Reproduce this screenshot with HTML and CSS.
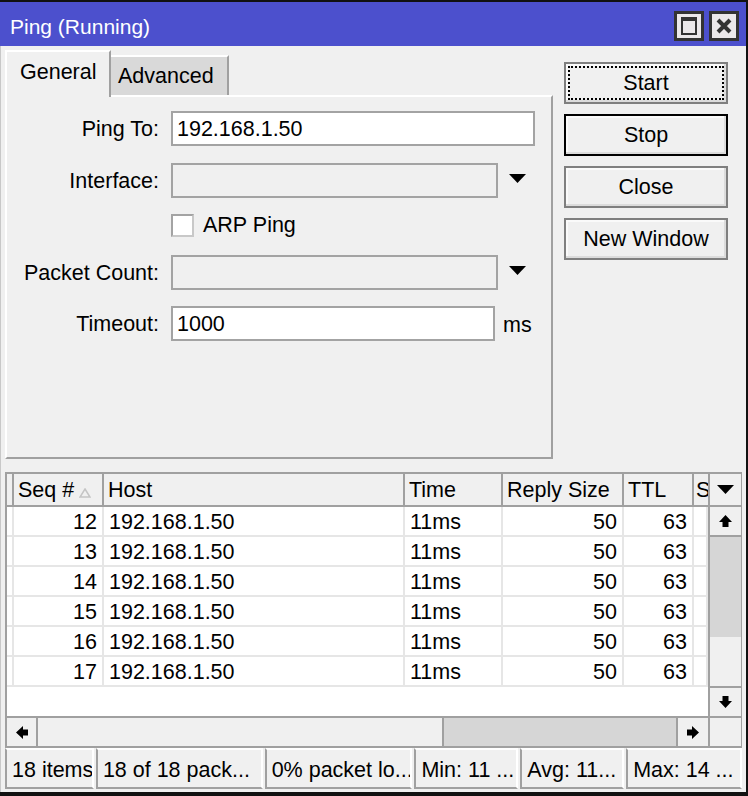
FILE: index.html
```html
<!DOCTYPE html>
<html>
<head>
<meta charset="utf-8">
<link rel="stylesheet" href="styles.css">
</head>
<body>
<div class="window">
  <div class="titlebar">
    <span class="title">Ping (Running)</span>
    <div class="tb-btns">
      <span class="tb-btn">
        <svg width="30" height="30" viewBox="0 0 30 30"><rect x="0" y="0" width="30" height="30" fill="#333"/><rect x="3" y="3" width="24" height="24" fill="#ebe8ea"/><rect x="7" y="6" width="16" height="18" fill="#333"/><rect x="9" y="10" width="12" height="12" fill="#ebe8ea"/></svg>
      </span>
      <span class="tb-btn">
        <svg width="30" height="30" viewBox="0 0 30 30"><rect x="0" y="0" width="30" height="30" fill="#333"/><rect x="3" y="3" width="24" height="24" fill="#ebe8ea"/><path d="M9 9 L21 21 M21 9 L9 21" stroke="#333" stroke-width="4"/></svg>
      </span>
    </div>
  </div>
  <div class="main">
    <div class="top">
      <div class="tabwrap">
        <div class="tabs">
          <div class="tab active">General</div>
          <div class="tab">Advanced</div>
        </div>
        <div class="panel">
          <div class="row">
            <span class="lbl">Ping To:</span>
            <div class="field w-ping">192.168.1.50</div>
          </div>
          <div class="row mt17">
            <span class="lbl">Interface:</span>
            <div class="field disabled w-drop"></div>
            <svg class="caret" width="17" height="9" viewBox="0 0 17 9"><path d="M0 0 H17 L8.5 9 Z" fill="#000"/></svg>
          </div>
          <div class="row check-row">
            <span class="lbl"></span>
            <span class="checkbox"></span>
            <span class="check-label">ARP Ping</span>
          </div>
          <div class="row mt18">
            <span class="lbl">Packet Count:</span>
            <div class="field disabled w-drop"></div>
            <svg class="caret" width="17" height="9" viewBox="0 0 17 9"><path d="M0 0 H17 L8.5 9 Z" fill="#000"/></svg>
          </div>
          <div class="row mt16">
            <span class="lbl">Timeout:</span>
            <div class="field w-timeout">1000</div>
            <span class="unit">ms</span>
          </div>
        </div>
      </div>
      <div class="buttons">
        <div class="btn focused">Start</div>
        <div class="btn default">Stop</div>
        <div class="btn">Close</div>
        <div class="btn">New Window</div>
      </div>
    </div>

    <div class="table">
      <div class="list">
        <div class="hdr">
          <div class="hc grip"></div>
          <div class="hc">Seq # <svg class="sort" width="12" height="10" viewBox="0 0 12 10"><path d="M6 1 L11 9 H1 Z" fill="none" stroke="#c4c4c4" stroke-width="1.5"/></svg></div>
          <div class="hc">Host</div>
          <div class="hc">Time</div>
          <div class="hc">Reply Size</div>
          <div class="hc">TTL</div>
          <div class="hc cut">S</div>
        </div>
        <div class="tr"><div class="td"></div><div class="td r">12</div><div class="td">192.168.1.50</div><div class="td">11ms</div><div class="td r">50</div><div class="td r">63</div><div class="td"></div></div>
        <div class="tr"><div class="td"></div><div class="td r">13</div><div class="td">192.168.1.50</div><div class="td">11ms</div><div class="td r">50</div><div class="td r">63</div><div class="td"></div></div>
        <div class="tr"><div class="td"></div><div class="td r">14</div><div class="td">192.168.1.50</div><div class="td">11ms</div><div class="td r">50</div><div class="td r">63</div><div class="td"></div></div>
        <div class="tr"><div class="td"></div><div class="td r">15</div><div class="td">192.168.1.50</div><div class="td">11ms</div><div class="td r">50</div><div class="td r">63</div><div class="td"></div></div>
        <div class="tr"><div class="td"></div><div class="td r">16</div><div class="td">192.168.1.50</div><div class="td">11ms</div><div class="td r">50</div><div class="td r">63</div><div class="td"></div></div>
        <div class="tr"><div class="td"></div><div class="td r">17</div><div class="td">192.168.1.50</div><div class="td">11ms</div><div class="td r">50</div><div class="td r">63</div><div class="td"></div></div>
      </div>
      <div class="vscroll">
        <div class="sb-btn menu"><svg width="17" height="9" viewBox="0 0 17 9"><path d="M0 0 H17 L8.5 9 Z" fill="#000"/></svg></div>
        <div class="sb-btn up"><svg width="13" height="12" viewBox="0 0 13 12"><path d="M6.5 0 L13 7 H9.5 V12 H3.5 V7 H0 Z" fill="#000"/></svg></div>
        <div class="vtrack"></div>
        <div class="vthumb"></div>
        <div class="sb-btn down"><svg width="13" height="12" viewBox="0 0 13 12"><path d="M6.5 12 L13 5 H9.5 V0 H3.5 V5 H0 Z" fill="#000"/></svg></div>
      </div>
      <div class="hscroll">
        <div class="hb-btn"><svg width="12" height="13" viewBox="0 0 12 13"><path d="M0 6.5 L7 0 V3.5 H12 V9.5 H7 V13 Z" fill="#000"/></svg></div>
        <div class="hthumb"></div>
        <div class="htrack"></div>
        <div class="hb-btn"><svg width="12" height="13" viewBox="0 0 12 13"><path d="M12 6.5 L5 0 V3.5 H0 V9.5 H5 V13 Z" fill="#000"/></svg></div>
      </div>
      <div class="corner"></div>
    </div>

    <div class="status">
      <div class="cell c1">18 items</div>
      <div class="cell c2">18 of 18 pack...</div>
      <div class="cell c3">0% packet lo...</div>
      <div class="cell c4">Min: 11 ...</div>
      <div class="cell c5">Avg: 11...</div>
      <div class="cell c6">Max: 14 ...</div>
    </div>
  </div>
</div>
</body>
</html>
```
FILE: styles.css
```css
* { box-sizing: border-box; }
html, body { margin: 0; padding: 0; }
body {
  width: 748px;
  height: 796px;
  overflow: hidden;
  background: #f0f0f0;
  font-family: "Liberation Sans", Arial, sans-serif;
  font-size: 21.5px;
  color: #000;
}
.window {
  width: 748px;
  height: 796px;
  border-top: 2px solid #111;
  border-right: 2px solid #111;
  border-bottom: 4px solid #111;
  display: flex;
  flex-direction: column;
  background: #f0f0f0;
}
.titlebar {
  height: 44px;
  flex: none;
  background: #4c50cd;
  display: flex;
  align-items: center;
  justify-content: space-between;
  padding: 0 7px 0 10px;
}
.title { color: #fff; font-size: 21px; margin-top: 6px; }
.tb-btns { display: flex; gap: 5px; margin-top: 4px; }
.tb-btn { display: block; width: 30px; height: 30px; }
.tb-btn svg { display: block; }

.main {
  flex: 1;
  display: flex;
  flex-direction: column;
  padding: 0 4px 0 4px;
  border-left: 1px solid #c8c8c8;
}
.top { height: 426px; display: flex; flex: none; }
.tabwrap { width: 548px; padding-top: 4px; }
.tabs { display: flex; align-items: flex-end; height: 45px; }
.tab {
  height: 40px;
  background: #d9d9d9;
  border-top: 2px solid #fff;
  border-right: 2px solid #a0a0a0;
  display: flex;
  align-items: center;
  padding: 0 7px;
  width: 118px;
  white-space: nowrap;
}
.tab.active {
  width: 106px;
  height: 47px;
  margin-bottom: -2px;
  background: #f0f0f0;
  border-left: 2px solid #fff;
  padding: 0 0 4px 13px;
  position: relative;
  z-index: 1;
}
.panel {
  height: 364px;
  border-top: 2px solid #fff;
  border-left: 2px solid #fff;
  border-right: 2px solid #a0a0a0;
  border-bottom: 2px solid #a0a0a0;
  padding-top: 14px;
}
.row { display: flex; align-items: center; height: 35px; }
.mt17 { margin-top: 17px; }
.mt18 { margin-top: 18px; }
.mt16 { margin-top: 16px; }
.check-row { height: 23px; margin-top: 16px; }
.lbl { width: 152px; text-align: right; margin-right: 12px; flex: none; white-space: nowrap; padding-top: 2px; }
.field {
  height: 35px;
  border: 2px solid #a3a3a3;
  background: #fff;
  padding: 2px 0 0 4px;
  display: flex;
  align-items: center;
}
.field.disabled { background: #f0f0f0; }
.w-ping { width: 364px; }
.w-drop { width: 327px; }
.w-timeout { width: 324px; }
.caret { margin-left: 11px; margin-top: -4px; }
.unit { margin-left: 8px; padding-top: 4px; }
.checkbox {
  width: 23px;
  height: 23px;
  border: 2px solid #a3a3a3;
  background: #fff;
  border-right-color: #c8c8c8;
  border-bottom-color: #c8c8c8;
}
.check-label { margin-left: 9px; }

.buttons {
  margin-left: 11px;
  margin-top: 16px;
  width: 164px;
  display: flex;
  flex-direction: column;
  gap: 10px;
}
.btn {
  height: 42px;
  border: 2px solid #7f7f7f;
  background: #f0f0f0;
  box-shadow: inset -2px -2px 0 #dcdcdc, inset 2px 2px 0 #fafafa;
  display: flex;
  align-items: center;
  justify-content: center;
}
.btn.focused { outline: 2px dotted #000; outline-offset: -6px; }
.btn.default { border-color: #000; }

.table {
  height: 276px;
  flex: none;
  border: 2px solid #a0a0a0;
  background: #fff;
  display: grid;
  grid-template-columns: 701px 33px;
  grid-template-rows: 242px 30px;
}
.list { overflow: hidden; }
.hdr, .tr {
  display: grid;
  grid-template-columns: 7px 90px 301px 98px 121px 70px 14px;
}
.hdr { height: 33px; background: #f0f0f0; border-bottom: 2px solid #a0a0a0; }
.hc {
  border-right: 2px solid #a0a0a0;
  padding: 2px 0 0 4px;
  line-height: 29px;
  white-space: nowrap;
  overflow: hidden;
  display: flex;
  align-items: center;
}
.hc.grip { padding: 0; }
.hc.cut { border-right: none; padding-left: 2px; }
.sort { margin-left: 5px; margin-top: 4px; }
.tr { height: 30px; }
.td {
  border-right: 2px solid #e6e6e6;
  border-bottom: 2px solid #e6e6e6;
  line-height: 30px;
  padding-left: 5px;
  white-space: nowrap;
  overflow: hidden;
}
.td.r { text-align: right; padding-left: 0; padding-right: 5px; }

.vscroll {
  border-left: 2px solid #a0a0a0;
  display: flex;
  flex-direction: column;
  background: #f0f0f0;
}
.sb-btn {
  display: flex;
  align-items: center;
  justify-content: center;
  background: #f0f0f0;
  border-bottom: 2px solid #a0a0a0;
}
.sb-btn.menu { height: 33px; }
.sb-btn.up { height: 30px; }
.sb-btn.down { height: 30px; border-bottom: none; border-top: 2px solid #a0a0a0; }
.vtrack { height: 100px; background: #d6d6d6; }
.vthumb { height: 49px; background: #f0f0f0; }

.hscroll {
  display: flex;
  border-top: 2px solid #a0a0a0;
  background: #f0f0f0;
}
.hb-btn {
  width: 31px;
  display: flex;
  align-items: center;
  justify-content: center;
  border-right: 2px solid #a0a0a0;
}
.hb-btn:last-child { border-right: none; border-left: 2px solid #a0a0a0; }
.hthumb { width: 406px; background: #f0f0f0; border-right: 2px solid #a0a0a0; }
.htrack { width: 232px; background: #d6d6d6; }
.corner { background: #f0f0f0; border-top: 2px solid #a0a0a0; border-left: 2px solid #a0a0a0; }

.status {
  height: 44px;
  flex: none;
  display: flex;
  gap: 2px;
  padding-bottom: 3px;
}
.cell {
  height: 41px;
  border-left: 2px solid #a0a0a0;
  border-bottom: 2px solid #a0a0a0;
  border-right: 2px solid #fff;
  border-top: 2px solid #fff;
  padding: 3px 0 0 5px;
  display: flex;
  align-items: center;
  white-space: nowrap;
  overflow: hidden;
}
.c1 { width: 89px; }
.c2 { width: 167px; }
.c3 { width: 148px; }
.c4 { width: 104px; }
.c5 { width: 104px; }
.c6 { width: 116px; }
```
